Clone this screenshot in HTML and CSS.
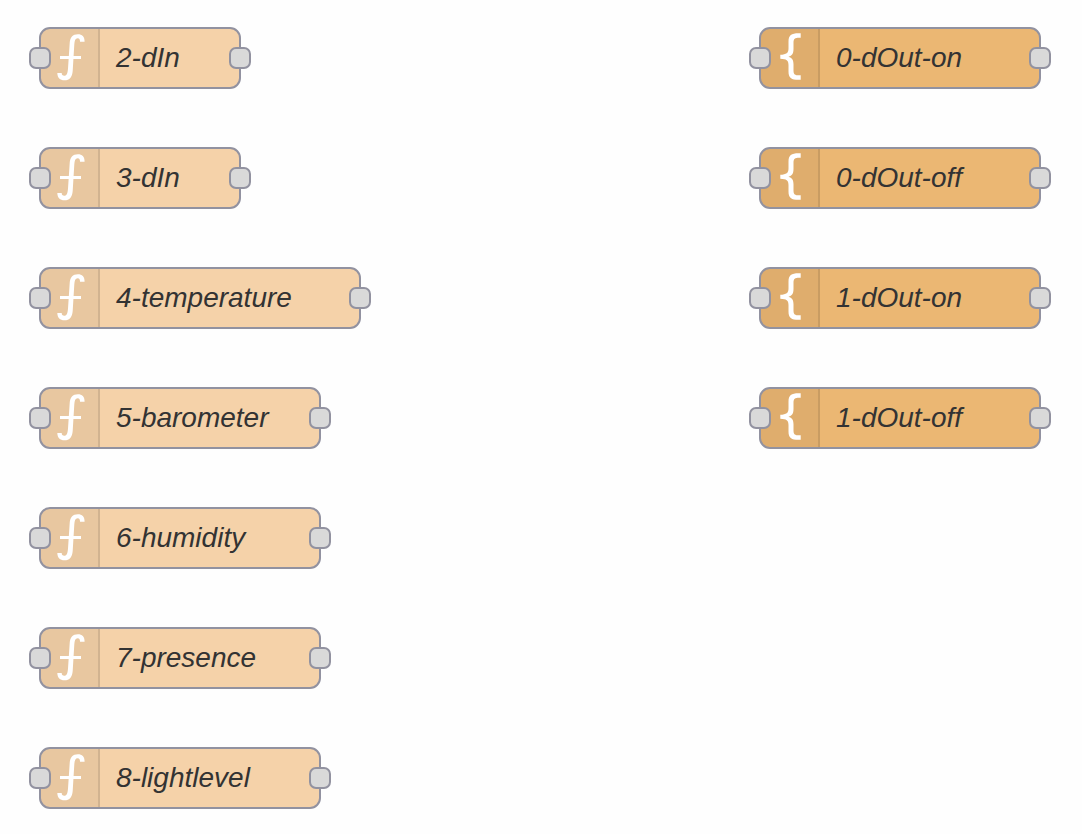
FILE: index.html
```html
<!DOCTYPE html>
<html lang="en">
<head>
<meta charset="utf-8">
<title>Flow</title>
<link rel="stylesheet" href="styles.css">
</head>
<body>
<svg class="defs" aria-hidden="true">
  <symbol id="function" viewBox="0 0 57 58">
    <path d="M39 12.800H43.600C43.600 7.500 41 5.300 37 5.300C31.500 5.300 29.200 8.500 28.700 14L27 39.500C26.600 44.500 25.800 46.800 23.300 46.800C21.500 46.800 20.700 45.800 20.700 44H16.300C16.500 48.800 19 51.300 23.400 51.300C28.800 51.300 31.200 48 31.700 42L33.300 15.500C33.600 11.500 34.400 9.300 36.600 9.300C38.500 9.300 39 10.500 39 12.800Z" fill="#fff"/>
    <path d="M19 28.500H40" stroke="#fff" stroke-width="3"/>
  </symbol>
  <symbol id="template" viewBox="0 0 57 58">
    <path d="M39.700 4.200V8.700C34.500 8.500 32.500 9 32.500 13.500V20C32.500 24.500 31 26.800 27.500 27.800C31 28.800 32.500 31 32.500 35.500V41.500C32.500 46 34.500 46.500 39.700 46.300V50.800C31 51.200 27.500 49.500 27.500 42.500V36C27.500 31.500 25.500 30 19.300 29.800V25.800C25.500 25.500 27.500 24 27.500 19.500V12.500C27.500 5.500 31 3.800 39.700 4.200Z" fill="#fff"/>
  </symbol>
</svg>
<main class="flow">
  <section class="column">
    <div class="node function small"><svg class="icon"><use href="#function"/></svg><span class="label">2-dIn</span><i class="port in"></i><i class="port out"></i></div>
    <div class="node function small"><svg class="icon"><use href="#function"/></svg><span class="label">3-dIn</span><i class="port in"></i><i class="port out"></i></div>
    <div class="node function large"><svg class="icon"><use href="#function"/></svg><span class="label">4-temperature</span><i class="port in"></i><i class="port out"></i></div>
    <div class="node function"><svg class="icon"><use href="#function"/></svg><span class="label">5-barometer</span><i class="port in"></i><i class="port out"></i></div>
    <div class="node function"><svg class="icon"><use href="#function"/></svg><span class="label">6-humidity</span><i class="port in"></i><i class="port out"></i></div>
    <div class="node function"><svg class="icon"><use href="#function"/></svg><span class="label">7-presence</span><i class="port in"></i><i class="port out"></i></div>
    <div class="node function"><svg class="icon"><use href="#function"/></svg><span class="label">8-lightlevel</span><i class="port in"></i><i class="port out"></i></div>
  </section>
  <section class="column">
    <div class="node template"><svg class="icon"><use href="#template"/></svg><span class="label">0-dOut-on</span><i class="port in"></i><i class="port out"></i></div>
    <div class="node template"><svg class="icon"><use href="#template"/></svg><span class="label">0-dOut-off</span><i class="port in"></i><i class="port out"></i></div>
    <div class="node template"><svg class="icon"><use href="#template"/></svg><span class="label">1-dOut-on</span><i class="port in"></i><i class="port out"></i></div>
    <div class="node template"><svg class="icon"><use href="#template"/></svg><span class="label">1-dOut-off</span><i class="port in"></i><i class="port out"></i></div>
  </section>
</main>
</body>
</html>
```
FILE: styles.css
```css
* {
  box-sizing: border-box;
}

body {
  margin: 0;
  background: #fefefe;
  color: #333;
  font-family: "Liberation Sans", Arial, sans-serif;
}

.defs {
  position: absolute;
  width: 0;
  height: 0;
}

.flow {
  display: flex;
  justify-content: space-between;
  padding: 27px 41px 24px 39px;
}

.column {
  display: flex;
  flex-direction: column;
  gap: 58px;
}

.node {
  position: relative;
  display: flex;
  align-items: center;
  width: 282px;
  height: 62px;
  border: 2px solid #9292a0;
  border-radius: 11px;
}

.small {
  width: 202px;
}

.large {
  width: 322px;
}

.function {
  background: #f5d2a9;
}

.template {
  background: #ebb773;
}

.icon {
  flex: none;
  width: 59px;
  height: 58px;
  border-right: 2px solid rgba(0, 0, 0, 0.1);
  border-radius: 9px 0 0 9px;
  background: rgba(0, 0, 0, 0.05);
}

.label {
  padding-left: 16px;
  font-size: 28px;
  font-style: italic;
  line-height: 32px;
  white-space: nowrap;
}

.port {
  position: absolute;
  top: 18px;
  width: 22px;
  height: 22px;
  border: 2px solid #9292a0;
  border-radius: 7px;
  background: #d9d9d9;
}

.in {
  left: -12px;
}

.out {
  right: -12px;
}
```
